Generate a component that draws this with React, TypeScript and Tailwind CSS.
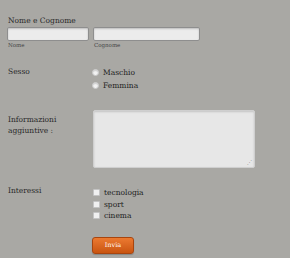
import React from 'react';

const serif = { fontFamily: '"DejaVu Serif", "Liberation Serif", serif' };

const Radio: React.FC<{ label: string }> = ({ label }) => (
    <label className="flex items-center gap-[4px] h-[13px]">
        <span className="w-[7px] h-[7px] rounded-full bg-[#f2f2f2] border border-[#c9c9c9] shadow-[inset_0_1px_1px_rgba(0,0,0,0.15)]" />
        <span className="text-[7.5px] text-[#222]">{label}</span>
    </label>
);

const Check: React.FC<{ label: string }> = ({ label }) => (
    <label className="flex items-center gap-[4px] h-[11.5px]">
        <span className="w-[7px] h-[7px] rounded-[1px] bg-[#f0f0f0] border border-[#c4c4c4]" />
        <span className="text-[7.5px] text-[#222]">{label}</span>
    </label>
);

export default function App() {
    return (
        <div className="w-[290px] h-[258px] bg-[#a9a8a4] text-[#2a2a2a] overflow-hidden" style={serif}>
            <div className="pt-[16px] pl-[7px]">
                <p className="text-[7.5px] leading-[10px] pl-[1px]">Nome e Cognome</p>
                <div className="flex gap-[4px] mt-[1px]">
                    <div>
                        <div className="w-[82px] h-[14px] bg-[#ececec] border border-[#8e8e8e] rounded-[2px] shadow-[inset_0_1px_2px_rgba(0,0,0,0.2)]" />
                        <p className="text-[5.5px] leading-[8px] text-[#444] pl-[1px]">Nome</p>
                    </div>
                    <div>
                        <div className="w-[107px] h-[14px] bg-[#ececec] border border-[#8e8e8e] rounded-[2px] shadow-[inset_0_1px_2px_rgba(0,0,0,0.2)]" />
                        <p className="text-[5.5px] leading-[8px] text-[#444] pl-[1px]">Cognome</p>
                    </div>
                </div>

                <div className="grid grid-cols-[85px_1fr] mt-[18px]">
                    <p className="text-[7.5px] leading-[10px] pl-[1px]">Sesso</p>
                    <div className="-mt-[1px]">
                        <Radio label="Maschio" />
                        <Radio label="Femmina" />
                    </div>
                </div>

                <div className="grid grid-cols-[86px_1fr] mt-[18px]">
                    <p className="text-[7.5px] leading-[11px] pl-[1px] pt-[4px]">Informazioni<br />aggiuntive :</p>
                    <div className="w-[162px] h-[58px] bg-[#e7e7e7] border border-[#cfcfcf] rounded-[2px] shadow-[inset_0_1px_2px_rgba(0,0,0,0.15)] relative">
                        <span className="absolute right-[2px] bottom-[1px] text-[5px] text-[#999]">⋰</span>
                    </div>
                </div>

                <div className="grid grid-cols-[86px_1fr] mt-[18px]">
                    <p className="text-[7.5px] leading-[10px] pl-[1px]">Interessi</p>
                    <div className="mt-[1px]">
                        <Check label="tecnologia" />
                        <Check label="sport" />
                        <Check label="cinema" />
                    </div>
                </div>

                <div className="pl-[85px] mt-[8px]">
                    <button className="w-[42px] h-[17px] rounded-[3px] border border-[#a8450e] bg-gradient-to-b from-[#ec7a30] to-[#c9540f] text-white text-[6.5px] leading-[15px] shadow-[0_1px_1px_rgba(0,0,0,0.2)]">
                        Invia
                    </button>
                </div>
            </div>
        </div>
    );
}
